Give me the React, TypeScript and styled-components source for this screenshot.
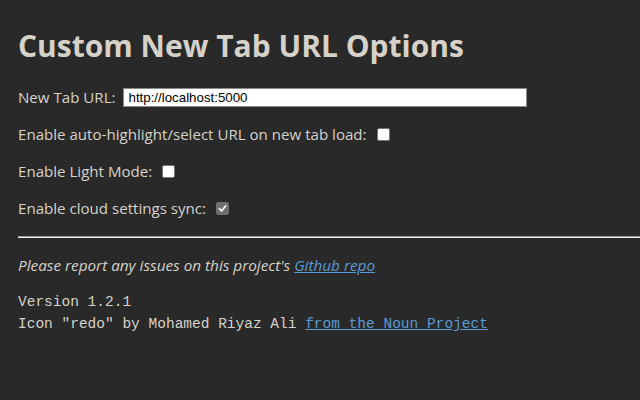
import React from "react";
import styled, { createGlobalStyle } from "styled-components";

const GlobalStyle = createGlobalStyle`
  html, body {
    margin: 0;
    background-color: #292929;
  }
  body {
    font-family: "Open Sans", "Noto Sans", sans-serif;
    color: #d6d2ca;
  }
`;

const Page = styled.div`
  padding: 0 0 0 18px;
  height: 400px;
  box-sizing: border-box;
  overflow: hidden;
`;

const Title = styled.h1`
  margin: 0;
  padding-top: 24px;
  font-size: 30px;
  font-weight: 700;
  line-height: 44px;
  color: #d6d2ca;
`;

const Form = styled.div`
  display: flex;
  flex-direction: column;
  gap: 15px;
  margin-top: 18px;
  font-size: 15.1px;
`;

const Row = styled.label`
  display: flex;
  align-items: center;
  gap: 8px;
  height: 22px;
`;

const UrlInput = styled.input`
  width: 404px;
  height: 19px;
  box-sizing: border-box;
  border: 1px solid #8a8a8a;
  padding: 0 4px;
  font-family: "Liberation Sans", Arial, sans-serif;
  font-size: 13.3px;
  color: #000;
  background: #fff;
  outline: none;
`;

const Box = styled.span<{ $checked?: boolean }>`
  display: inline-flex;
  align-items: center;
  justify-content: center;
  width: 13px;
  height: 13px;
  box-sizing: border-box;
  border-radius: 2px;
  background: ${(p) => (p.$checked ? "#6e6e6e" : "#ffffff")};
  border: 1px solid ${(p) => (p.$checked ? "#6e6e6e" : "#767676")};
  margin-left: 2px;
`;

const Rule = styled.hr`
  margin: 17px 0 0;
  border: none;
  border-top: 1px solid #9a9a9a;
  border-bottom: 1px solid #eeeeee;
`;

const Note = styled.p`
  margin: 17px 0 0;
  font-style: italic;
  font-size: 15.3px;
`;

const Link = styled.a`
  color: #5c9ad6;
  text-decoration: underline;
`;

const Credits = styled.pre`
  margin: 16px 0 0;
  font-family: "Liberation Mono", "DejaVu Sans Mono", monospace;
  font-size: 14.5px;
  line-height: 22px;
  color: #d6d2ca;
`;

const Check = () => (
  <svg width="9" height="9" viewBox="0 0 10 10">
    <path
      d="M1.5 5.2 L4 7.8 L8.6 2"
      fill="none"
      stroke="#fff"
      strokeWidth="1.8"
      strokeLinecap="round"
      strokeLinejoin="round"
    />
  </svg>
);

const App: React.FC = () => {
  return (
    <Page>
      <GlobalStyle />
      <Title>Custom New Tab URL Options</Title>
      <Form>
        <Row>
          New Tab URL:
          <UrlInput defaultValue="http://localhost:5000" />
        </Row>
        <Row>
          Enable auto-highlight/select URL on new tab load:
          <Box />
        </Row>
        <Row>
          Enable Light Mode:
          <Box />
        </Row>
        <Row>
          Enable cloud settings sync:
          <Box $checked>
            <Check />
          </Box>
        </Row>
      </Form>
      <Rule />
      <Note>
        Please report any issues on this project's{" "}
        <Link href="#">Github repo</Link>
      </Note>
      <Credits>
        Version 1.2.1{"\n"}Icon "redo" by Mohamed Riyaz Ali{" "}
        <Link href="#">from the Noun Project</Link>
      </Credits>
    </Page>
  );
};

export default App;
